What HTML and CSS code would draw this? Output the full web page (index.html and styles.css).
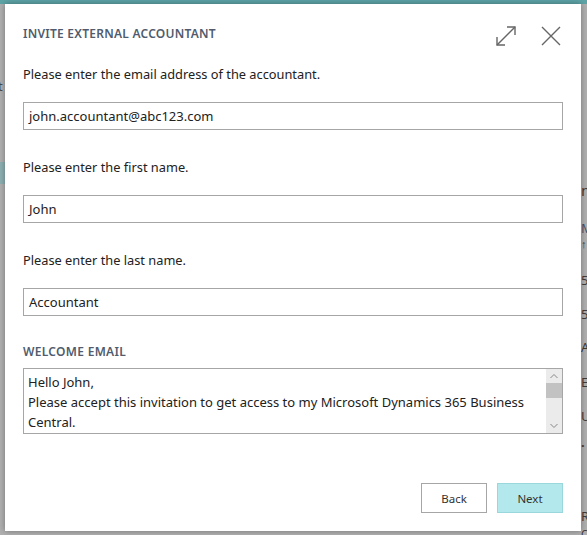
FILE: index.html
```html
<!DOCTYPE html>
<html lang="en">
<head>
<meta charset="utf-8">
<title>Invite External Accountant</title>
<link rel="stylesheet" href="styles.css">
</head>
<body>
<div class="backdrop">
  <div class="bg-topbar"></div>
  <div class="bg-left">
    <span class="bg-left-t">t</span>
    <span class="bg-left-band"></span>
  </div>
  <div class="bg-right">
    <span class="r1">n</span>
    <span class="r2">M</span>
    <span class="r3">↑</span>
    <span class="r4">5</span>
    <span class="r5">5</span>
    <span class="r6">A</span>
    <span class="r7">E</span>
    <span class="r8">U</span>
    <span class="r9">.</span>
    <span class="r10">R</span>
    <span class="r11">CODE</span>
  </div>
</div>

<div class="dialog">
  <header class="dialog-header">
    <h1 class="dialog-title">INVITE EXTERNAL ACCOUNTANT</h1>
    <div class="dialog-actions">
      <svg class="icon" width="22" height="22" viewBox="0 0 22 22" fill="none" stroke="#666" stroke-width="1.4">
        <path d="M2 20 L20 2"/>
        <path d="M12 2 H20 V10"/>
        <path d="M2 12 V20 H10"/>
      </svg>
      <svg class="icon" width="22" height="22" viewBox="0 0 22 22" fill="none" stroke="#666" stroke-width="1.4">
        <path d="M2 2 L20 20 M20 2 L2 20"/>
      </svg>
    </div>
  </header>

  <div class="dialog-body">
    <p class="label">Please enter the email address of the accountant.</p>
    <div class="field">john.accountant@abc123.com</div>

    <p class="label gap">Please enter the first name.</p>
    <div class="field">John</div>

    <p class="label gap">Please enter the last name.</p>
    <div class="field">Accountant</div>

    <h2 class="section">WELCOME EMAIL</h2>
    <div class="textarea">
      <div class="textarea-text">Hello John,<br>Please accept this invitation to get access to my Microsoft Dynamics 365 Business Central.</div>
      <div class="scrollbar">
        <svg width="16" height="14" viewBox="0 0 16 14" fill="none" stroke="#888" stroke-width="1"><path d="M4.5 9 L8 5.5 L11.5 9"/></svg>
        <div class="thumb"></div>
        <div class="track-fill"></div>
        <svg width="16" height="14" viewBox="0 0 16 14" fill="none" stroke="#888" stroke-width="1"><path d="M4.5 5 L8 8.5 L11.5 5"/></svg>
      </div>
    </div>
  </div>

  <footer class="dialog-footer">
    <button class="btn">Back</button>
    <button class="btn btn-primary">Next</button>
  </footer>
</div>
</body>
</html>
```

FILE: styles.css
```css
* { box-sizing: border-box; }
html, body { margin: 0; padding: 0; }
body {
  width: 587px;
  height: 535px;
  overflow: hidden;
  background: #b0b0b0;
  font-family: "Noto Sans", "Open Sans", sans-serif;
  color: #212121;
  position: relative;
}

.backdrop {
  position: absolute;
  inset: 0;
}
.bg-topbar {
  height: 4px;
  background: #5ea4a7;
}
.bg-left {
  position: absolute;
  left: 0;
  top: 0;
  width: 5px;
  height: 535px;
  overflow: hidden;
}
.bg-left-t {
  position: absolute;
  left: -2px;
  top: 77px;
  font-size: 13px;
  color: #4a4a4a;
}
.bg-left-band {
  position: absolute;
  left: 0;
  top: 162px;
  width: 5px;
  height: 22px;
  background: #8db0b2;
}
.bg-right {
  position: absolute;
  left: 581px;
  top: 0;
  width: 6px;
  height: 535px;
  font-size: 13px;
  color: #3d3d3d;
  overflow: hidden;
}
.bg-right span { position: absolute; left: 0; line-height: 1; }
.r1 { top: 183px; font-size: 15px; }
.r2 { top: 222px; color: #3a5670; }
.r3 { top: 238px; font-size: 11px; }
.r4 { top: 274px; }
.r5 { top: 308px; }
.r6 { top: 341px; }
.r7 { top: 376px; }
.r8 { top: 410px; }
.r9 { top: 436px; font-weight: 700; }
.r10 { top: 510px; }
.r11 { top: 528px; font-size: 11px; }

.dialog {
  position: absolute;
  left: 5px;
  top: 4px;
  width: 576px;
  height: 527px;
  background: #fff;
  box-shadow: 0 0 6px rgba(0,0,0,0.35);
  display: flex;
  flex-direction: column;
  padding: 0 18px 18px 18px;
}

.dialog-header {
  display: flex;
  align-items: center;
  justify-content: space-between;
  height: 60px;
  padding-top: 4px;
}
.dialog-title {
  margin: -6px 0 0 0;
  font-size: 12px;
  font-weight: 600;
  letter-spacing: 0.25px;
  color: #505c6d;
}
.dialog-actions {
  display: flex;
  gap: 23px;
  margin-right: 1px;
}
.icon { display: block; }

.dialog-body {
  flex: 1;
}
.label {
  margin: 0;
  font-size: 12.8px;
  line-height: 20px;
  height: 20px;
}
.label.gap { margin-top: 27px; }
.field {
  margin-top: 18px;
  height: 28px;
  border: 1px solid #a6a6a6;
  padding: 0 5px;
  font-size: 13px;
  line-height: 26px;
}
.section {
  margin: 26px 0 0 0;
  font-size: 12px;
  font-weight: 600;
  letter-spacing: 0.3px;
  color: #505c6d;
  line-height: 20px;
  height: 20px;
}
.textarea {
  margin-top: 6px;
  height: 66px;
  border: 1px solid #a6a6a6;
  display: flex;
}
.textarea-text {
  flex: 1;
  padding: 3px 4px;
  font-size: 13px;
  line-height: 20px;
  overflow: hidden;
}
.scrollbar {
  width: 16px;
  background: #ebebeb;
  display: flex;
  flex-direction: column;
}
.scrollbar svg { display: block; }
.thumb {
  height: 15px;
  background: #c2c2c2;
}
.track-fill { flex: 1; }

.dialog-footer {
  display: flex;
  justify-content: flex-end;
  gap: 10px;
}
.btn {
  width: 66px;
  height: 30px;
  border: 1px solid #a6a6a6;
  background: #fff;
  font-family: "Noto Sans", "Open Sans", sans-serif;
  font-size: 11.5px;
  color: #333;
  padding: 0;
}
.btn-primary {
  background: #b3e9ed;
  border-color: #9ad7dc;
}
```
